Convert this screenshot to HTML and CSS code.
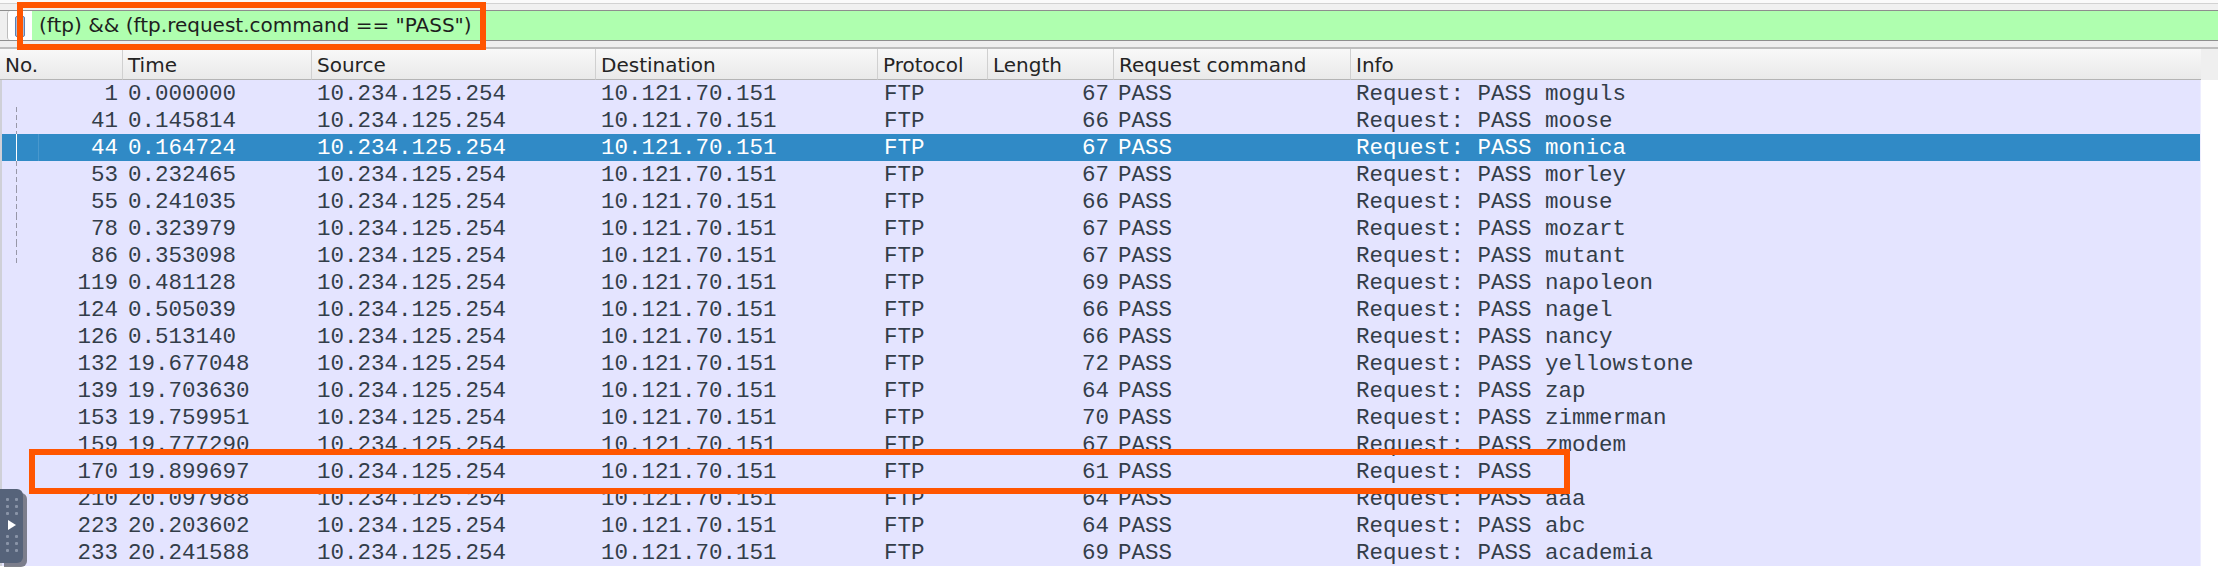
FILE: index.html
```html
<!DOCTYPE html>
<html>
<head>
<meta charset="utf-8">
<link rel="stylesheet" href="styles.css">
</head>
<body>
<div class="page">
  <div class="toolbar"></div>
  <div class="filter">
    <div class="bookmark">
      <svg width="11" height="22" viewBox="0 0 11 22"><rect x="0.5" y="0.5" width="9" height="20" rx="1.5" fill="#a7bfe0" stroke="#5d7fb0"/></svg>
    </div>
    <div class="filter-input">(ftp) &amp;&amp; (ftp.request.command == "PASS")</div>
  </div>
  <div class="sep"></div>
  <div class="list">
    <div class="head">
      <div class="hc">No.</div>
      <div class="hc">Time</div>
      <div class="hc">Source</div>
      <div class="hc">Destination</div>
      <div class="hc">Protocol</div>
      <div class="hc">Length</div>
      <div class="hc">Request command</div>
      <div class="hc">Info</div>
    </div>
    <div class="rows">
      <div class="row"><span class="c num">1</span><span class="c">0.000000</span><span class="c">10.234.125.254</span><span class="c">10.121.70.151</span><span class="c">FTP</span><span class="c num">67</span><span class="c">PASS</span><span class="c">Request: PASS moguls</span></div>
      <div class="row rel"><span class="c num">41</span><span class="c">0.145814</span><span class="c">10.234.125.254</span><span class="c">10.121.70.151</span><span class="c">FTP</span><span class="c num">66</span><span class="c">PASS</span><span class="c">Request: PASS moose</span></div>
      <div class="row rel selected"><span class="c num">44</span><span class="c">0.164724</span><span class="c">10.234.125.254</span><span class="c">10.121.70.151</span><span class="c">FTP</span><span class="c num">67</span><span class="c">PASS</span><span class="c">Request: PASS monica</span></div>
      <div class="row rel"><span class="c num">53</span><span class="c">0.232465</span><span class="c">10.234.125.254</span><span class="c">10.121.70.151</span><span class="c">FTP</span><span class="c num">67</span><span class="c">PASS</span><span class="c">Request: PASS morley</span></div>
      <div class="row rel"><span class="c num">55</span><span class="c">0.241035</span><span class="c">10.234.125.254</span><span class="c">10.121.70.151</span><span class="c">FTP</span><span class="c num">66</span><span class="c">PASS</span><span class="c">Request: PASS mouse</span></div>
      <div class="row rel"><span class="c num">78</span><span class="c">0.323979</span><span class="c">10.234.125.254</span><span class="c">10.121.70.151</span><span class="c">FTP</span><span class="c num">67</span><span class="c">PASS</span><span class="c">Request: PASS mozart</span></div>
      <div class="row rel last"><span class="c num">86</span><span class="c">0.353098</span><span class="c">10.234.125.254</span><span class="c">10.121.70.151</span><span class="c">FTP</span><span class="c num">67</span><span class="c">PASS</span><span class="c">Request: PASS mutant</span></div>
      <div class="row"><span class="c num">119</span><span class="c">0.481128</span><span class="c">10.234.125.254</span><span class="c">10.121.70.151</span><span class="c">FTP</span><span class="c num">69</span><span class="c">PASS</span><span class="c">Request: PASS napoleon</span></div>
      <div class="row"><span class="c num">124</span><span class="c">0.505039</span><span class="c">10.234.125.254</span><span class="c">10.121.70.151</span><span class="c">FTP</span><span class="c num">66</span><span class="c">PASS</span><span class="c">Request: PASS nagel</span></div>
      <div class="row"><span class="c num">126</span><span class="c">0.513140</span><span class="c">10.234.125.254</span><span class="c">10.121.70.151</span><span class="c">FTP</span><span class="c num">66</span><span class="c">PASS</span><span class="c">Request: PASS nancy</span></div>
      <div class="row"><span class="c num">132</span><span class="c">19.677048</span><span class="c">10.234.125.254</span><span class="c">10.121.70.151</span><span class="c">FTP</span><span class="c num">72</span><span class="c">PASS</span><span class="c">Request: PASS yellowstone</span></div>
      <div class="row"><span class="c num">139</span><span class="c">19.703630</span><span class="c">10.234.125.254</span><span class="c">10.121.70.151</span><span class="c">FTP</span><span class="c num">64</span><span class="c">PASS</span><span class="c">Request: PASS zap</span></div>
      <div class="row"><span class="c num">153</span><span class="c">19.759951</span><span class="c">10.234.125.254</span><span class="c">10.121.70.151</span><span class="c">FTP</span><span class="c num">70</span><span class="c">PASS</span><span class="c">Request: PASS zimmerman</span></div>
      <div class="row"><span class="c num">159</span><span class="c">19.777290</span><span class="c">10.234.125.254</span><span class="c">10.121.70.151</span><span class="c">FTP</span><span class="c num">67</span><span class="c">PASS</span><span class="c">Request: PASS zmodem</span></div>
      <div class="row"><span class="c num">170</span><span class="c">19.899697</span><span class="c">10.234.125.254</span><span class="c">10.121.70.151</span><span class="c">FTP</span><span class="c num">61</span><span class="c">PASS</span><span class="c">Request: PASS</span></div>
      <div class="row"><span class="c num">210</span><span class="c">20.097988</span><span class="c">10.234.125.254</span><span class="c">10.121.70.151</span><span class="c">FTP</span><span class="c num">64</span><span class="c">PASS</span><span class="c">Request: PASS aaa</span></div>
      <div class="row"><span class="c num">223</span><span class="c">20.203602</span><span class="c">10.234.125.254</span><span class="c">10.121.70.151</span><span class="c">FTP</span><span class="c num">64</span><span class="c">PASS</span><span class="c">Request: PASS abc</span></div>
      <div class="row"><span class="c num">233</span><span class="c">20.241588</span><span class="c">10.234.125.254</span><span class="c">10.121.70.151</span><span class="c">FTP</span><span class="c num">69</span><span class="c">PASS</span><span class="c">Request: PASS academia</span></div>
    </div>
  </div>
  <div class="mark mark-filter"></div>
  <div class="mark mark-row"></div>
  <div class="dock">
    <div class="dots"><i></i><i></i><i></i><i></i><i></i><i></i></div>
    <svg class="play" width="8" height="10" viewBox="0 0 8 10"><path d="M0 0 L8 5 L0 10 Z" fill="#ffffff"/></svg>
    <div class="dots"><i></i><i></i><i></i><i></i><i></i><i></i></div>
  </div>
</div>
</body>
</html>
```
FILE: styles.css
```css
html, body {
  margin: 0;
  padding: 0;
  background: #ffffff;
}

.page {
  position: relative;
  width: 2218px;
  height: 571px;
  overflow: hidden;
  background: #ffffff;
}

.toolbar {
  height: 7px;
  border-top: 3px solid #fafafa;
  box-shadow: inset 0 1px 0 #d2d2d2;
  background: #f0f0f0;
  border-bottom: 1px solid #8e8e8e;
}

.filter {
  display: flex;
  height: 29px;
  padding-left: 7px;
  background: #efefef;
  border-bottom: 1px solid #8e8e8e;
}

.bookmark {
  width: 25px;
  background: #ffffff;
  border-left: 1px solid #bdbdbd;
  border-radius: 3px 0 0 3px;
  display: flex;
  align-items: center;
  justify-content: center;
  padding-top: 2px;
  box-sizing: border-box;
}

.filter-input {
  flex: 1;
  background: #afffaf;
  padding-left: 7px;
  font-family: "DejaVu Sans", sans-serif;
  font-size: 20px;
  line-height: 29px;
  color: #1e1e1e;
  white-space: nowrap;
}

.sep {
  height: 6px;
  background: #eeeeee;
  border-bottom: 2px solid #bdbdbd;
}

.list {
  background: #ffffff;
}

.head {
  display: grid;
  grid-template-columns: 123px 189px 284px 282px 110px 126px 237px 850px;
  height: 31px;
  background: #efefef;
}

.hc {
  box-sizing: border-box;
  height: 31px;
  padding: 2px 0 0 5px;
  line-height: 28px;
  font-family: "DejaVu Sans", sans-serif;
  font-size: 20px;
  color: #242424;
  background: linear-gradient(#f8f8f8, #e9e9e9);
  border-right: 1px solid #d0d0d0;
  border-bottom: 1px solid #b4b4b4;
  white-space: nowrap;
  overflow: hidden;
}

.hc:last-child {
  border-right: none;
}

.rows {
  width: 2201px;
  box-sizing: border-box;
  border-left: 2px solid #cfd0d8;
  border-right: 1px solid #eeeeff;
  background: #e4e4ff;
}

.row {
  position: relative;
  display: grid;
  grid-template-columns: 121px 189px 284px 282px 110px 126px 237px 849px;
  height: 27px;
  font-family: "Liberation Mono", monospace;
  font-size: 22.5px;
  line-height: 27px;
  color: #333d49;
}

.c {
  box-sizing: border-box;
  padding: 1px 0 0 5px;
  white-space: nowrap;
  overflow: hidden;
}

.c.num {
  text-align: right;
  padding: 1px 5px 0 0;
}

.row .c:nth-child(7) {
  padding-left: 4px;
}

.row .c:nth-child(5) {
  padding-left: 6px;
}

.rel::before {
  content: "";
  position: absolute;
  left: 14px;
  top: 0;
  bottom: 0;
  width: 1px;
  background: repeating-linear-gradient(to bottom, #9797a8 0 5px, transparent 5px 8px);
}

.rel.last::before {
  bottom: 3px;
}

.selected {
  background: #308ac6;
  color: #ffffff;
}

.selected::before {
  background: #ffffff;
}

.selected::after {
  content: "";
  position: absolute;
  left: 36px;
  top: 0;
  bottom: 0;
  width: 1px;
  background: rgba(255, 255, 255, 0.12);
}

.mark {
  position: absolute;
  box-sizing: border-box;
  border: 6px solid #ff5500;
}

.mark-filter {
  left: 17px;
  top: 2px;
  width: 469px;
  height: 48px;
}

.mark-row {
  left: 29px;
  top: 449px;
  width: 1541px;
  height: 45px;
}

.dock {
  position: absolute;
  left: 0;
  top: 489px;
  width: 23px;
  height: 74px;
  box-sizing: border-box;
  padding: 9px 0 0 6px;
  background: #56637a;
  border-radius: 0 6px 6px 0;
  box-shadow: 4px 4px 0 rgba(90, 92, 102, 0.75);
  display: flex;
  flex-direction: column;
  gap: 5px;
}

.dots {
  display: grid;
  grid-template-columns: 3px 3px;
  column-gap: 6px;
  row-gap: 4px;
}

.dots i {
  display: block;
  width: 3px;
  height: 3px;
  border-radius: 1px;
  background: #8a94a8;
}

.play {
  display: block;
  margin-left: 2px;
}
```
